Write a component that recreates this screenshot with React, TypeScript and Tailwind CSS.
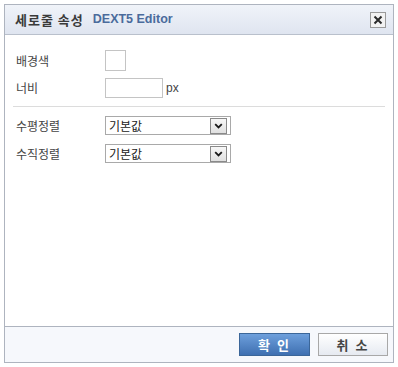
import React from "react";

function Chevron() {
  return (
    <svg width="9" height="6" viewBox="0 0 9 6" className="block">
      <path d="M1.2 1.2 L4.5 4.5 L7.8 1.2" fill="none" stroke="#1a1a1a" strokeWidth="1.8" />
    </svg>
  );
}

function SelectBox() {
  return (
    <div className="flex h-[19px] w-[126px] items-center border border-[#a9a9a9] bg-white pl-[3px] pr-[3px]">
      <span className="flex-1 text-[12px] leading-none text-[#222]">기본값</span>
      <div className="flex h-[16px] w-[17px] items-center justify-center border border-[#8a8a8a] bg-gradient-to-b from-[#f7f7f7] to-[#e0e0e0]">
        <Chevron />
      </div>
    </div>
  );
}

export default function App() {
  return (
    <div
      className="h-[367px] w-[398px] bg-white p-[4px]"
      style={{ fontFamily: '"Noto Sans CJK KR", "Liberation Sans", sans-serif' }}
    >
      <div className="flex h-[359px] w-[390px] flex-col border border-[#aeb4bf] bg-white">
        <div className="flex h-[30px] items-center border-b border-[#b9c0cc] bg-gradient-to-b from-[#f0f3f9] to-[#dfe5f0] pl-[10px] pr-[7px]">
          <span className="text-[13px] font-bold tracking-[1px] text-[#3a3a3a]">세로줄 속성</span>
          <span
            className="ml-[9px] text-[12.5px] font-bold text-[#4a6b9c]"
            style={{ fontFamily: '"Liberation Sans", sans-serif' }}
          >
            DEXT5 Editor
          </span>
          <div className="ml-auto flex h-[16px] w-[16px] items-center justify-center border border-[#9a9a9a] bg-[#f2f2f2]">
            <svg width="10" height="10" viewBox="0 0 10 10">
              <path d="M1.5 1.5 L8.5 8.5 M8.5 1.5 L1.5 8.5" stroke="#2a2a2a" strokeWidth="2" />
            </svg>
          </div>
        </div>

        <div className="flex-1 px-[8px] pt-[15px]">
          <div className="flex items-center">
            <span className="w-[92px] pl-[3px] text-[12px] text-[#444]">배경색</span>
            <div className="h-[21px] w-[21px] border border-[#c4c4c4] bg-white" />
          </div>
          <div className="mt-[7px] flex items-center">
            <span className="w-[92px] pl-[3px] text-[12px] text-[#444]">너비</span>
            <div className="h-[20px] w-[58px] border border-[#c4c4c4] bg-white" />
            <span className="ml-[3px] text-[12px] text-[#444]" style={{ fontFamily: '"Liberation Sans", sans-serif' }}>
              px
            </span>
          </div>
          <div className="mt-[8px] h-px bg-[#dcdcdc]" />
          <div className="mt-[9px] flex items-center">
            <span className="w-[92px] pl-[3px] text-[12px] text-[#444]">수평정렬</span>
            <SelectBox />
          </div>
          <div className="mt-[9px] flex items-center">
            <span className="w-[92px] pl-[3px] text-[12px] text-[#444]">수직정렬</span>
            <SelectBox />
          </div>
        </div>

        <div className="flex h-[36px] items-center justify-end gap-[8px] border-t border-[#aeb4bf] bg-[#f6f8fc] pr-[5px]">
          <button className="flex h-[23px] w-[71px] items-center justify-center border border-[#3b6699] bg-gradient-to-b from-[#6d9fdc] to-[#3f70b1] text-[13px] font-bold tracking-[2px] text-white">
            확 인
          </button>
          <button className="flex h-[23px] w-[70px] items-center justify-center border border-[#a8a8a8] bg-gradient-to-b from-[#ffffff] to-[#e6eaf1] text-[13px] font-bold tracking-[2px] text-[#444]">
            취 소
          </button>
        </div>
      </div>
    </div>
  );
}
